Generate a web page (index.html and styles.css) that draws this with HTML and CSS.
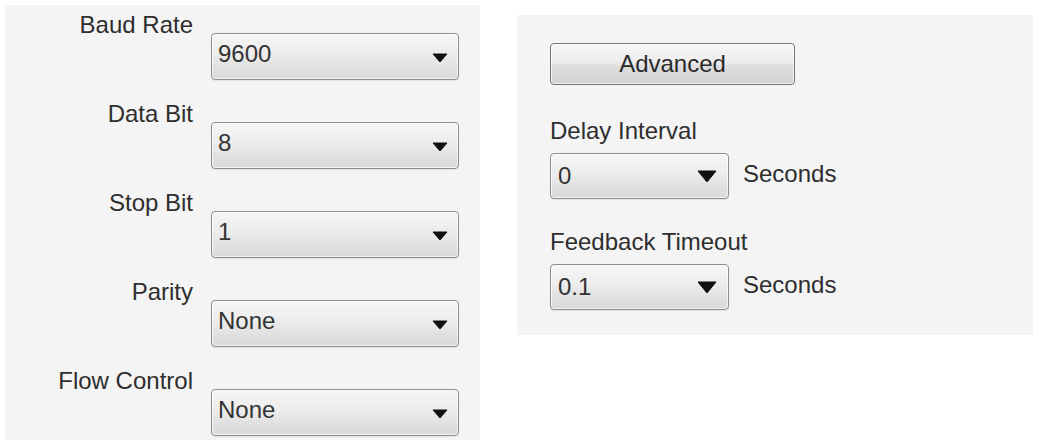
FILE: index.html
```html
<!DOCTYPE html>
<html>
<head>
<meta charset="utf-8">
<link rel="stylesheet" href="styles.css">
</head>
<body>
<div class="page">
  <div class="panel-left">
    <div class="row">
      <div class="label">Baud Rate</div>
      <div class="combo combo-wide"><span class="val">9600</span><svg class="arrow-s" viewBox="0 0 16 10"><path d="M1 1 L15 1 L8 9 Z" fill="#111" stroke="#111" stroke-width="1" stroke-linejoin="round"/></svg></div>
    </div>
    <div class="row">
      <div class="label">Data Bit</div>
      <div class="combo combo-wide"><span class="val">8</span><svg class="arrow-s" viewBox="0 0 16 10"><path d="M1 1 L15 1 L8 9 Z" fill="#111" stroke="#111" stroke-width="1" stroke-linejoin="round"/></svg></div>
    </div>
    <div class="row">
      <div class="label">Stop Bit</div>
      <div class="combo combo-wide"><span class="val">1</span><svg class="arrow-s" viewBox="0 0 16 10"><path d="M1 1 L15 1 L8 9 Z" fill="#111" stroke="#111" stroke-width="1" stroke-linejoin="round"/></svg></div>
    </div>
    <div class="row">
      <div class="label">Parity</div>
      <div class="combo combo-wide"><span class="val">None</span><svg class="arrow-s" viewBox="0 0 16 10"><path d="M1 1 L15 1 L8 9 Z" fill="#111" stroke="#111" stroke-width="1" stroke-linejoin="round"/></svg></div>
    </div>
    <div class="row">
      <div class="label">Flow Control</div>
      <div class="combo combo-wide"><span class="val">None</span><svg class="arrow-s" viewBox="0 0 16 10"><path d="M1 1 L15 1 L8 9 Z" fill="#111" stroke="#111" stroke-width="1" stroke-linejoin="round"/></svg></div>
    </div>
  </div>
  <div class="panel-right">
    <div class="button">Advanced</div>
    <div class="rlabel first">Delay Interval</div>
    <div class="rrow">
      <div class="combo combo-small"><span class="val">0</span><svg class="arrow-l" viewBox="0 0 20 13"><path d="M1 1 L19 1 L10 12 Z" fill="#111" stroke="#111" stroke-width="1" stroke-linejoin="round"/></svg></div>
      <span class="unit">Seconds</span>
    </div>
    <div class="rlabel">Feedback Timeout</div>
    <div class="rrow">
      <div class="combo combo-small"><span class="val">0.1</span><svg class="arrow-l" viewBox="0 0 20 13"><path d="M1 1 L19 1 L10 12 Z" fill="#111" stroke="#111" stroke-width="1" stroke-linejoin="round"/></svg></div>
      <span class="unit">Seconds</span>
    </div>
  </div>
</div>
</body>
</html>
```

FILE: styles.css
```css
html, body {
  margin: 0;
  padding: 0;
  background: #ffffff;
}
body {
  font-family: "Liberation Sans", Arial, sans-serif;
  font-size: 24px;
  color: #2e2e2e;
  width: 1037px;
  height: 446px;
  overflow: hidden;
}
.page {
  display: flex;
  align-items: flex-start;
  padding: 5px 0 0 5px;
}
.panel-left {
  width: 475px;
  height: 435px;
  box-sizing: border-box;
  background: #f4f4f4;
  padding-top: 6px;
  display: flex;
  flex-direction: column;
  gap: 20px;
}
.row {
  display: grid;
  grid-template-columns: 188px 248px;
  grid-template-rows: 22px 47px;
  column-gap: 18px;
}
.label {
  grid-column: 1;
  grid-row: 1;
  text-align: right;
  line-height: 28px;
  height: 28px;
  white-space: nowrap;
}
.combo {
  box-sizing: border-box;
  border: 1px solid #8d8d8d;
  border-radius: 4px;
  background: linear-gradient(to bottom, #f6f6f6 0%, #ececec 45%, #e0e0e0 75%, #d9d9d9 100%);
  box-shadow: inset 0 0 0 1px rgba(255,255,255,0.7), 0 1px 1px rgba(0,0,0,0.08);
  display: flex;
  justify-content: space-between;
  color: #333;
}
.combo-wide {
  grid-column: 2;
  grid-row: 2;
  height: 47px;
  padding: 6px 10px 0 6px;
  align-items: flex-start;
}
.combo-wide .val {
  line-height: 28px;
}
.arrow-s {
  width: 16px;
  height: 10px;
  margin-top: 13px;
}
.panel-right {
  margin-left: 37px;
  margin-top: 10px;
  width: 516px;
  height: 320px;
  box-sizing: border-box;
  background: #f4f4f4;
  padding: 28px 0 0 33px;
  display: flex;
  flex-direction: column;
  align-items: flex-start;
}
.button {
  width: 245px;
  height: 42px;
  box-sizing: border-box;
  border: 1px solid #767676;
  border-radius: 4px;
  background: linear-gradient(to bottom, #f7f7f7 0%, #ededed 45%, #dedede 55%, #d4d4d4 100%);
  box-shadow: inset 0 0 0 1px rgba(255,255,255,0.7);
  text-align: center;
  line-height: 40px;
  color: #2a2a2a;
}
.rlabel {
  line-height: 28px;
  margin-top: 29px;
  margin-bottom: 8px;
  white-space: nowrap;
}
.rlabel.first {
  margin-top: 32px;
}
.rrow {
  display: flex;
  align-items: center;
  gap: 14px;
}
.combo-small {
  width: 179px;
  height: 46px;
  padding: 0 11px 0 7px;
  align-items: center;
}
.combo-small .val {
  line-height: 28px;
}
.arrow-l {
  width: 20px;
  height: 13px;
}
.unit {
  line-height: 28px;
  margin-top: -4px;
}
```
